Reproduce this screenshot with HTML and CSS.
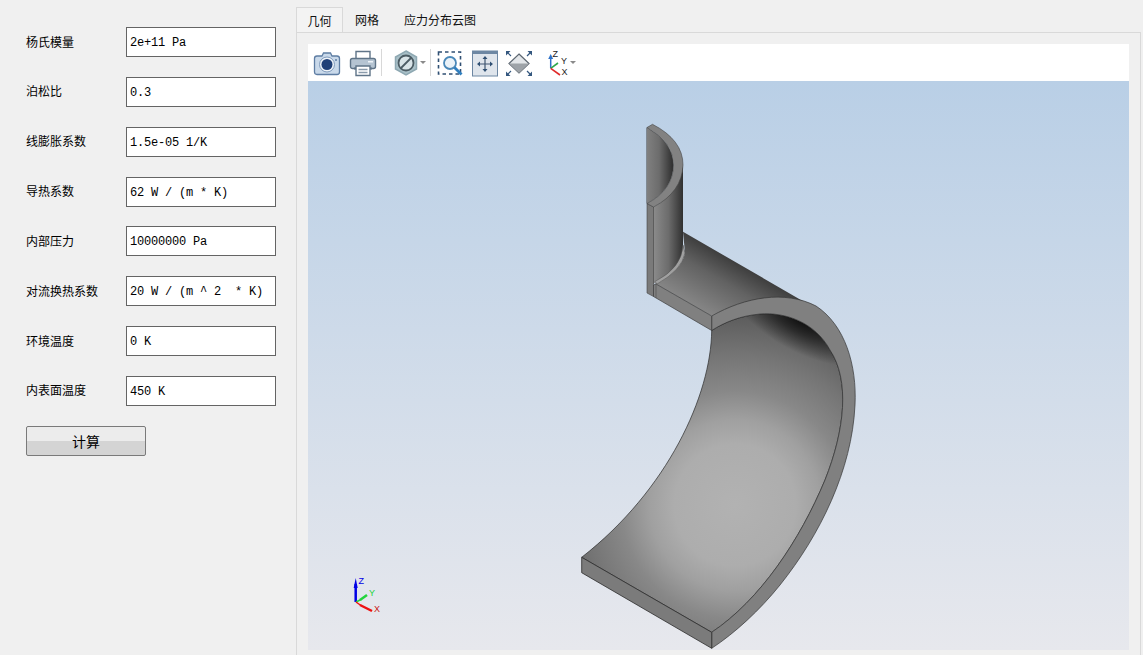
FILE: index.html
```html
<!DOCTYPE html>
<html lang="zh">
<head>
<meta charset="utf-8">
<title>几何</title>
<link rel="stylesheet" href="styles.css">
</head>
<body>
<aside class="form">
  <div class="fields">
    <label class="lbl">杨氏模量</label><div class="inp">2e+11 Pa</div>
    <label class="lbl">泊松比</label><div class="inp">0.3</div>
    <label class="lbl">线膨胀系数</label><div class="inp">1.5e-05 1/K</div>
    <label class="lbl">导热系数</label><div class="inp">62 W / (m * K)</div>
    <label class="lbl">内部压力</label><div class="inp">10000000 Pa</div>
    <label class="lbl">对流换热系数</label><div class="inp">20 W / (m ^ 2  * K)</div>
    <label class="lbl">环境温度</label><div class="inp">0 K</div>
    <label class="lbl">内表面温度</label><div class="inp">450 K</div>
  </div>
  <button class="calc">计算</button>
</aside>
<main class="main">
  <nav class="tabs">
    <div class="tab active">几何</div>
    <div class="tab">网格</div>
    <div class="tab last">应力分布云图</div>
  </nav>
  <section class="pane">
    <div class="viewer">
      <div class="toolbar">
        <svg class="ic" viewBox="0 0 28 28"><path d="M9 7l1.500-3h7L19 7h5Q26.500 7 26.500 9.500V23q0 2.500-2.500 2.500H4Q1.500 25.500 1.500 23V9.500Q1.500 7 4 7z" fill="#c9d9ea" stroke="#5e7da3" stroke-width="1.300"/><circle cx="14" cy="15.500" r="7.500" fill="#eef3f8" stroke="#7f9abb"/><circle cx="14" cy="15.500" r="5.500" fill="#1f3f77"/><circle cx="23" cy="11" r="1" fill="#5e7da3"/></svg>
        <svg class="ic s8" viewBox="0 0 28 28"><path d="M7 10V2.500h14V10" fill="#fff" stroke="#5f7488" stroke-width="1.400"/><rect x="1.500" y="9.500" width="25" height="10" rx="2" fill="#b5c4d2" stroke="#5f7488" stroke-width="1.400"/><rect x="19" y="12" width="5" height="1.500" fill="#eef3f8"/><path d="M5 19.500H23" stroke="#5f7488" stroke-width="2"/><path d="M7 17h14v9.500H7z" fill="#fff" stroke="#5f7488" stroke-width="1.400"/><path d="M9.500 20.500h9M9.500 23.500h9" stroke="#8a9bab" stroke-width="1.300"/></svg>
        <span class="sep s4"></span>
        <svg class="ic s10" viewBox="0 0 28 28"><path d="M14 2l10.500 6v12L14 26 3.500 20V8z" fill="#a9c0c8" stroke="#8ea8b2" stroke-width="1.500"/><circle cx="14" cy="14" r="7.500" fill="#d9e4e8" stroke="#4c5c64" stroke-width="1.800"/><path d="M9 19l10-10" stroke="#4c5c64" stroke-width="1.800"/></svg>
        <svg class="drop" viewBox="0 0 6 3"><path d="M0 0h6L3 3z" fill="#8a8a8a"/></svg>
        <span class="sep s4"></span>
        <svg class="ic s5" viewBox="0 0 28 28"><rect x="2.500" y="3" width="22" height="22" fill="none" stroke="#2f4f73" stroke-width="1.600" stroke-dasharray="3.500 3"/><circle cx="14" cy="14" r="6" fill="#eaf2f8" stroke="#4a88b8" stroke-width="1.800"/><path d="M18.500 18.500l7 7" stroke="#2f7fc0" stroke-width="2.800"/></svg>
        <svg class="ic s7" viewBox="0 0 28 28"><rect x="1.500" y="2" width="25" height="25" fill="#dfe5ec" stroke="#6d87a3"/><rect x="1.500" y="2" width="25" height="3" fill="#6d87a3"/><path d="M14 9v12M8 15h12" stroke="#3f5570" stroke-width="1.200"/><path d="M14 7l-2.500 3h5zM14 23l-2.500-3h5zM6 15l3-2.500v5zM22 15l-3-2.500v5z" fill="#2f4f73"/></svg>
        <svg class="ic s6" viewBox="0 0 28 28"><path d="M14 5l10 9.500L14 24 4 14.500z" fill="#e3e6e9" stroke="#5c6670" stroke-width="1.200"/><path d="M4 14.500h20L14 24z" fill="#9ea3a8"/><path d="M1 2h4.500L1 6.500zM27 2h-4.500L27 6.500zM1 27h4.500L1 22.500zM27 27h-4.500l4.500-4.500z" fill="#34577f"/><path d="M2 3l4 4M26 3l-4 4M2 26l4-4M26 26l-4-4" stroke="#34577f" stroke-width="1.200"/></svg>
        <svg class="ic-ax s13" viewBox="0 0 24 28"><path d="M4.700 19.300V8" stroke="#2f72c9" stroke-width="1.500"/><path d="M4.700 5l-2.500 5h5z" fill="#2f72c9"/><path d="M4.700 19.300L12 14" stroke="#2fa84a" stroke-width="1.600"/><path d="M4.700 19.300L14 26" stroke="#e02a2a" stroke-width="1.600"/><text x="6.500" y="8" class="axt">Z</text><text x="15" y="15" class="axt">Y</text><text x="15.500" y="26" class="axt">X</text></svg>
        <svg class="drop" viewBox="0 0 6 3"><path d="M0 0h6L3 3z" fill="#8a8a8a"/></svg>
      </div>
      <svg class="scene" viewBox="308 81 821 569" preserveAspectRatio="none">
        <defs>
          <linearGradient id="upper" x1="647" y1="0" x2="674" y2="0" gradientUnits="userSpaceOnUse">
            <stop offset="0" stop-color="#808080"/><stop offset=".45" stop-color="#6c6c6c"/><stop offset="1" stop-color="#2a2a2a"/>
          </linearGradient>
          <linearGradient id="wall" x1="653" y1="0" x2="684" y2="0" gradientUnits="userSpaceOnUse">
            <stop offset="0" stop-color="#8c8c8c"/><stop offset=".5" stop-color="#6c6c6c"/><stop offset="1" stop-color="#2c2c2c"/>
          </linearGradient>
          <linearGradient id="flat" x1="680" y1="305" x2="722" y2="232" gradientUnits="userSpaceOnUse">
            <stop offset="0" stop-color="#8c8c8c"/><stop offset=".5" stop-color="#626262"/><stop offset="1" stop-color="#202020"/>
          </linearGradient>
          <radialGradient id="bowl" cx="735" cy="505" r="190" gradientUnits="userSpaceOnUse">
            <stop offset="0" stop-color="#b2b2b2"/><stop offset=".32" stop-color="#adadad"/><stop offset=".45" stop-color="#a0a0a0"/><stop offset=".6" stop-color="#888"/><stop offset=".79" stop-color="#757575"/><stop offset="1" stop-color="#5c5c5c"/>
          </radialGradient>
          <radialGradient id="shade" cx="0" cy="0" r="1" gradientUnits="userSpaceOnUse" gradientTransform="translate(803 318) rotate(28) scale(80 34)">
            <stop offset="0" stop-color="#000" stop-opacity=".9"/><stop offset=".45" stop-color="#000" stop-opacity=".55"/><stop offset="1" stop-color="#000" stop-opacity="0"/>
          </radialGradient>
        </defs>
        <!-- upper vertical piece -->
        <path d="M653 207Q676 196 683 165V232V245L685 253Q682 270 655 283L653 284z" fill="url(#wall)"/>
        <path d="M647 127.500V293L653.500 296.500V206.800L647 203.500z" fill="#7a7a7a" stroke="#444" stroke-width=".6"/>
        <path d="M647 127.500Q673 142 673.500 165Q673 190 647 203.500z" fill="url(#upper)"/>
        <path d="M647 127.500L652.500 124.300Q683 140 683 165Q682 192 653.500 207L647 203.500Q673 190 673.500 165Q673 142 647 127.500z" fill="#828282" stroke="#444" stroke-width=".6"/>
        <!-- flat web -->
        <path d="M683 231.700L803.500 301.500Q760 290 711.700 316L655 283.500Q682 270 685 253z" fill="url(#flat)"/>
        <path d="M655 281.500Q682 268 683 245L685 253Q682 270 657 284z" fill="#a0a0a0" stroke="#555" stroke-width=".5"/>
        <path d="M653.500 296.500L711.700 330.500V316L656 284L653.500 285z" fill="#808080" stroke="#3c3c3c" stroke-width=".7"/>
        <path d="M656 284V298" stroke="#555" stroke-width=".7"/>
        <!-- big surface -->
        <path d="M711.700 330.500C711 395 668 490 581.700 557.300L711.700 632.300C760 600 800 540 825 480C845 430 850 380 830 350C815 322 785 312 760 314C740 316 725 322 711.700 330.500z" fill="url(#bowl)" stroke="#2b2b2b" stroke-width=".7"/>
        <path d="M711.700 330.500C711 395 668 490 581.700 557.300L711.700 632.300C760 600 800 540 825 480C845 430 850 380 830 350C815 322 785 312 760 314C740 316 725 322 711.700 330.500z" fill="url(#shade)"/>
        <!-- ring -->
        <path d="M711.700 316C745 297 785 290 816 306C845 325 857 365 855 405C852 470 820 535 780 585C760 610 735 633 711.700 648.300V632.300C760 600 800 540 825 480C845 430 850 380 830 350C815 322 785 312 760 314C740 316 725 322 711.700 330.500z" fill="#808080" stroke="#333" stroke-width=".7"/>
        <!-- plate -->
        <path d="M581.700 557.300V572.700L711.700 648.300V632.300z" fill="#7b7b7b" stroke="#2b2b2b" stroke-width=".8"/>
        <path d="M711.700 316V330.500" stroke="#555" stroke-width=".7"/>
        <!-- corner triad -->
        <path d="M355.700 602V584" stroke="#0000e6" stroke-width="2.500"/>
        <path d="M355.700 578l-2 10h4z" fill="#0000e6"/>
        <path d="M356 602l5-2.500" stroke="#22d43c" stroke-width="1.500"/>
        <path d="M360 600l7-5" stroke="#22d43c" stroke-width="2.500"/>
        <path d="M356 602l5 3.500" stroke="#ee1111" stroke-width="1.500"/>
        <path d="M360 605l12 6" stroke="#ee1111" stroke-width="2.500"/>
        <text x="358.500" y="583.500" class="tz">Z</text>
        <text x="369" y="596" class="ty">Y</text>
        <text x="374" y="612" class="tx">X</text>
      </svg>
    </div>
  </section>
</main>
</body>
</html>
```

FILE: styles.css
```css
* { box-sizing: border-box; }
html, body { margin: 0; height: 100%; }
body {
  display: flex;
  height: 655px;
  overflow: hidden;
  background: #f0f0f0;
  font-family: "Noto Sans CJK SC", sans-serif;
  font-size: 12px;
  color: #000;
}
.form { width: 296px; flex: none; padding: 27px 20px 0 26px; }
.fields {
  display: grid;
  grid-template-columns: 100px 150px;
  grid-auto-rows: 30px;
  row-gap: 19.857px;
  align-items: center;
}
.lbl { line-height: 30px; margin-top: -1px; }
.inp {
  height: 30px;
  background: #fff;
  border: 1px solid #646464;
  padding-left: 3px;
  font-family: "Liberation Mono", "DejaVu Sans Mono", monospace;
  font-size: 12px;
  letter-spacing: -.2px;
  line-height: 30px;
  white-space: pre;
}
.calc {
  display: block;
  width: 120px;
  height: 30px;
  margin-top: 20px;
  padding: 0;
  border: 1px solid #7a7a7a;
  border-radius: 2px;
  background: linear-gradient(#ececec 0, #ececec 50%, #d4d4d4 50%, #d4d4d4 100%);
  font-family: "Noto Sans CJK SC", sans-serif;
  font-size: 14px;
  color: #000;
}
.main { flex: 1; display: flex; flex-direction: column; padding: 7px 2px 0 0; min-width: 0; }
.tabs { display: flex; height: 26px; flex: none; }
.tab { height: 26px; padding: 0 12px; line-height: 25px; color: #111; }
.tab.active { width: 47px; padding: 0; text-align: center; border: 1px solid #d9d9d9; border-bottom: 0; background: #f3f3f3; }
.tab.last { margin-left: 1px; }
.pane {
  flex: 1;
  margin-top: -1px;
  border: 1px solid #d9d9d9;
  border-bottom: 0;
  padding: 11px 11px 5px;
  display: flex;
  min-height: 0;
}
.viewer { flex: 1; display: flex; flex-direction: column; min-width: 0; }
.toolbar { height: 37px; flex: none; background: #fff; display: flex; align-items: center; padding-left: 5px; }
.ic { width: 28px; height: 28px; flex: none; display: block; }
.ic-ax { width: 24px; height: 28px; flex: none; display: block; }
.s4 { margin-left: 4px; } .s5 { margin-left: 5px; } .s6 { margin-left: 6px; } .s7 { margin-left: 7px; } .s8 { margin-left: 8px; } .s10 { margin-left: 10px; } .s13 { margin-left: 13px; }
.sep { width: 1px; height: 27px; background: #d8d8d8; flex: none; }
.drop { width: 6px; height: 3px; flex: none; }
.axt { font: 9px "Liberation Sans", sans-serif; fill: #222; }
.scene {
  flex: 1;
  display: block;
  width: 100%;
  min-height: 0;
  background: linear-gradient(#b9cfe6, #e7e8ed);
}
.tz, .ty, .tx { font: 9px "Liberation Sans", sans-serif; }
.tz { fill: #0000e6; } .ty { fill: #22d43c; } .tx { fill: #c81414; }
```
